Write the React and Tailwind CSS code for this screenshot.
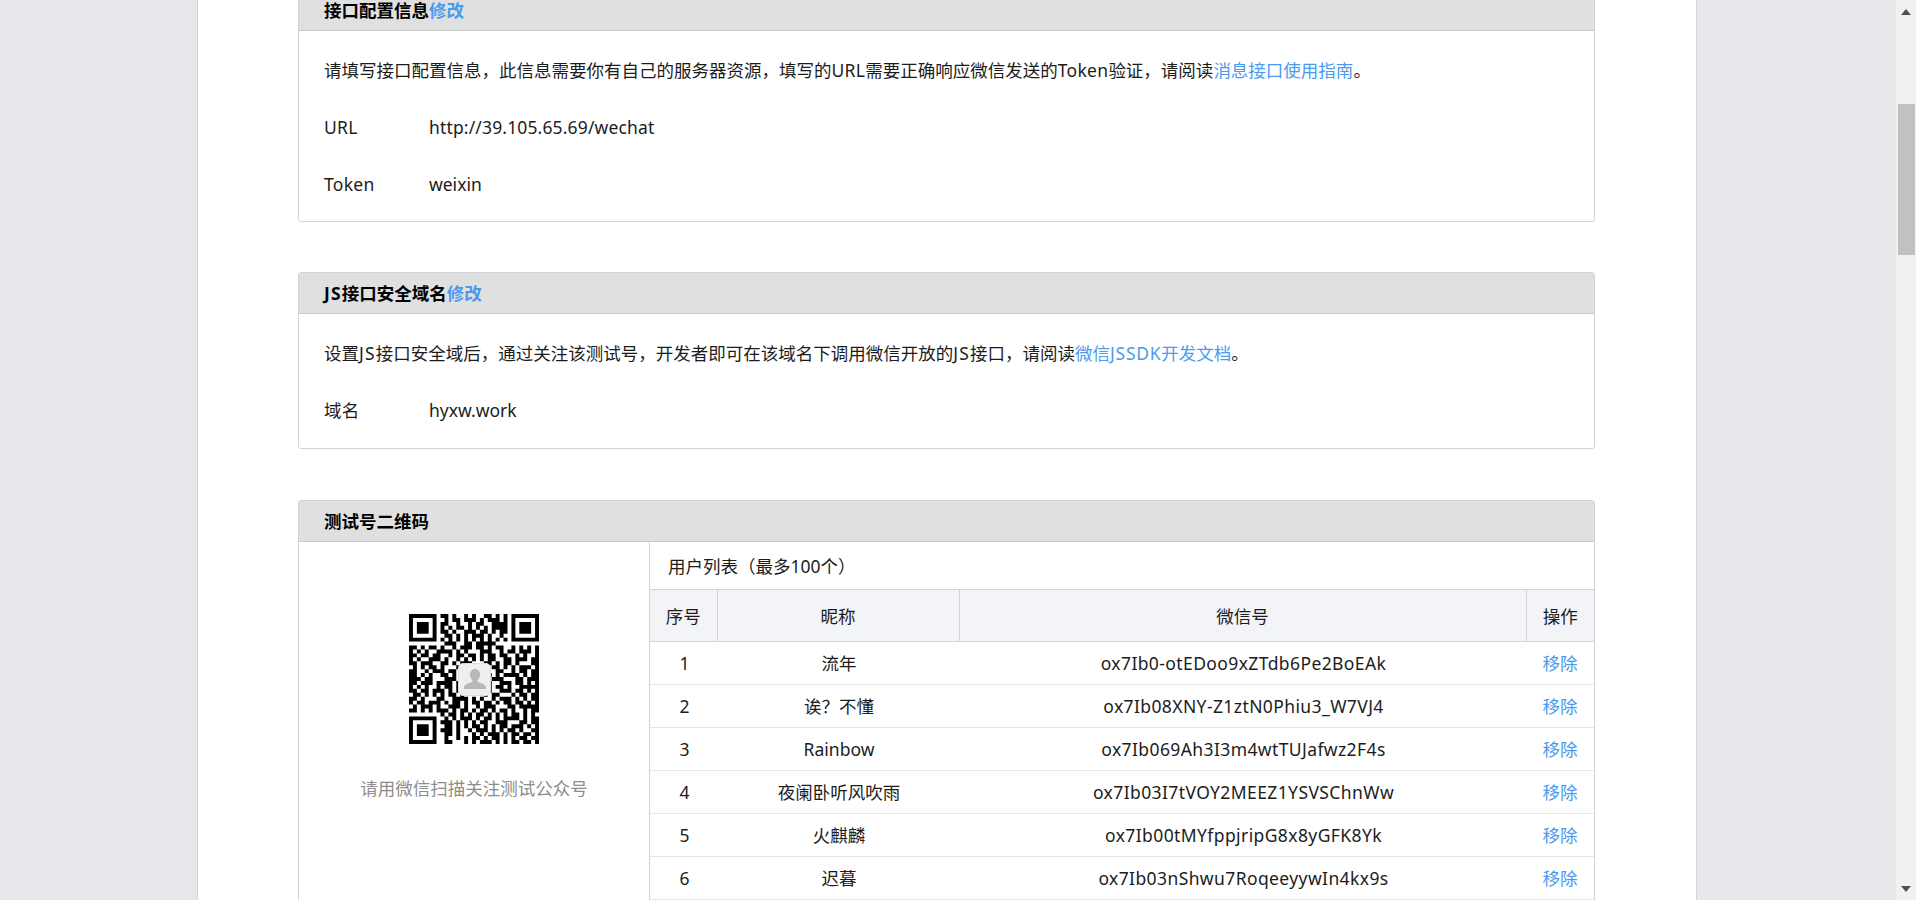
import React from 'react';

const finder = ['#######', '#.....#', '#.###.#', '#.###.#', '#.###.#', '#.....#', '#######'];

// rows of the data area next to the finder squares
const qrTop = [
  '##.#..#.#..##.#.#',
  '.#.##.###.#.###.#',
  '##..#..#.##..####',
  '#.#.##.#.#.#.####',
  '##.#..###.##.#.##',
  '.##.#.#.###.#..#.',
  '#.#.#.#.#.#.#.#.#',
  '.###..##.#####...',
];
const qrMiddle = [
  '##.#.##.#..#.###.##.#.##..#.#.#.#',
  '#.#.#..####.#.#...###..#.##.###.#',
  '##.##.##..#.##.##.#.##.##..#.#..#',
  '#.#..###.#..#.#.#.#.##..##.###.##',
  '##.###..##.#.###...##.#.##.#...##',
  '.#.#.##.#...#.#....#.##.#.#.###.#',
  '##..#.###.##.......#..##..#.##.##',
  '##.#.#..##.#.......##.#.####.#.##',
  '###.##...###.......#.###...##.###',
  '##.###.####.#......##..###.##.#.#',
  '#.#.#..#.##.#......##.##.#..#####',
  '##.##.###.#.#.....###..###.##.#.#',
  '.##.#.#.#.##.#.....#.##...#.##.##',
  '##.#...##..####.#.#..#.###.#.#.##',
  '#.##.###.#.##.#.##.##.#.##.##.#.#',
  '.#.###.#..###.#..#.###...##.#####',
  '##.#.#.###.#.##.#.##.#.##.#..#.##',
];
const qrBottomRight = [
  '#.##.#.#.##.#.#.#.##.#.#.',
  '.#.#.###.#.##.#.####.#.##',
  '###.#.#.#.##..###...##.##',
  '.##.#.#.##.#.#.##.###.#.#',
  '###.#..#.###.#.#.##.#..##',
  '.##.#...#.#.###.#.##.##.#',
  '.#..#.#.##.#.##.#.#.##.##',
  '.##...#.#.###.#.#.##.##.#',
];

const qrRows = [
  ...finder.map((row, i) => row + '.' + qrTop[i] + '.' + row),
  '........' + qrTop[7] + '........',
  ...qrMiddle,
  '........' + qrBottomRight[0],
  ...finder.map((row, i) => row + '.' + qrBottomRight[i + 1]),
];

const qrPath = qrRows
  .map((row, y) =>
    row
      .split('')
      .map((cell, x) => (cell === '#' ? `M${x} ${y}h1v1h-1z` : ''))
      .join('')
  )
  .join('');

const users = [
  { id: 1, name: '流年', wx: 'ox7Ib0-otEDoo9xZTdb6Pe2BoEAk' },
  { id: 2, name: '诶？不懂', wx: 'ox7Ib08XNY-Z1ztN0Phiu3_W7VJ4' },
  { id: 3, name: 'Rainbow', wx: 'ox7Ib069Ah3I3m4wtTUJafwz2F4s' },
  { id: 4, name: '夜阑卧听风吹雨', wx: 'ox7Ib03I7tVOY2MEEZ1YSVSChnWw' },
  { id: 5, name: '火麒麟', wx: 'ox7Ib00tMYfppjripG8x8yGFK8Yk' },
  { id: 6, name: '迟暮', wx: 'ox7Ib03nShwu7RoqeeyywIn4kx9s' },
];

const Panel = ({ title, edit, className = '', children }) => (
  <section className={`rounded-[3px] border border-[#d4d4d4] ${className}`}>
    <h3 className="flex h-[41px] items-center border-b border-[#c9c9c9] bg-[#e0e0e0] px-[25px] font-bold leading-[18px] text-black">
      {title}
      {edit && <a className="text-[#4a9bf0]">修改</a>}
    </h3>
    {children}
  </section>
);

const Row = ({ label, children }) => (
  <div className="flex h-[57px] items-center">
    {label && <span className="w-[105px] tracking-[0.3px]">{label}</span>}
    <span>{children}</span>
  </div>
);

const App = () => {
  return (
    <div className="flex h-[900px] w-full overflow-hidden bg-[#e6e8ec] text-[17.5px] text-[#1c1c1c] [font-family:'Noto_Sans','Noto_Sans_CJK_SC',sans-serif]">
      <div className="flex flex-1 justify-center pr-[2px]">
        <main className="h-full w-[1500px] border-x border-[#d4d4d4] bg-white pl-[100px] pr-[101px]">
          <Panel title="接口配置信息" edit className="-mt-[11px] pb-[8px]">
            <div className="px-[25px] pt-[11px]">
              <Row>
                请填写接口配置信息，此信息需要你有自己的服务器资源，填写的
                <span className="tracking-[0.3px]">URL</span>需要正确响应微信发送的
                <span className="tracking-[0.3px]">Token</span>验证，请阅读
                <a className="text-[#4a9bf0]">消息接口使用指南</a>。
              </Row>
              <Row label="URL">
                <span className="tracking-[0.15px]">http://39.105.65.69/wechat</span>
              </Row>
              <Row label="Token">weixin</Row>
            </div>
          </Panel>

          <Panel
            title={
              <>
                <span className="tracking-[1.2px]">JS</span>接口安全域名
              </>
            }
            edit
            className="mt-[50px] pb-[9px]"
          >
            <div className="px-[25px] pt-[11px]">
              <Row>
                设置<span className="tracking-[1.2px]">JS</span>接口安全域后，通过关注该测试号，开发者即可在该域名下调用微信开放的
                <span className="tracking-[1.2px]">JS</span>接口，请阅读
                <a className="text-[#4a9bf0]">
                  微信<span className="tracking-[0.7px]">JSSDK</span>开发文档
                </a>
                。
              </Row>
              <Row label="域名">hyxw.work</Row>
            </div>
          </Panel>

          <Panel title="测试号二维码" className="mt-[51px]">
            <div className="flex min-h-[420px]">
              <div className="flex w-[350px] flex-col items-center pt-[72px]">
                <div className="relative">
                  <svg width="130" height="130" viewBox="0 0 33 33" className="block">
                    <path d={qrPath} fill="#000" />
                  </svg>
                  <div className="absolute left-[49px] top-[49px] flex h-[33px] w-[33px] items-end justify-center overflow-hidden rounded-[5px] border border-[#dcdcdc] bg-[#efefef]">
                    <svg width="24" height="24" viewBox="0 0 24 24" className="mb-[3px]">
                      <path
                        d="M12 1c3 0 5 2.4 5 5.8 0 2.3-1 4.2-2.4 5.3v1.6c3.300 1.200 7.400 2.300 8.400 5.300v2H1v-2c1-3 5.100-4.100 8.400-5.300v-1.600C8 11 7 9.100 7 6.800 7 3.400 9 1 12 1z"
                        fill="#b8b8b8"
                      />
                    </svg>
                  </div>
                </div>
                <p className="mt-[31px] text-[#8d8d8d]">请用微信扫描关注测试公众号</p>
              </div>

              <div className="flex-1 border-l border-[#d4d4d4]">
                <div className="flex h-[48px] items-center border-b border-[#d4d4d4] pl-[18px] pt-[2px]">
                  用户列表（最多100个）
                </div>
                <table className="w-full table-fixed border-collapse text-center">
                  <colgroup>
                    <col className="w-[67px]" />
                    <col className="w-[242px]" />
                    <col />
                    <col className="w-[68px]" />
                  </colgroup>
                  <thead>
                    <tr className="h-[51px] border-b border-[#d4d4d4] bg-[#f3f4f8]">
                      <th className="border-r border-[#d4d4d4] pt-[2px] font-normal">序号</th>
                      <th className="border-r border-[#d4d4d4] pt-[2px] font-normal">昵称</th>
                      <th className="border-r border-[#d4d4d4] pt-[2px] font-normal">微信号</th>
                      <th className="pt-[2px] font-normal">操作</th>
                    </tr>
                  </thead>
                  <tbody>
                    {users.map((u) => (
                      <tr key={u.id} className="h-[43px] border-b border-[#e7e7eb]">
                        <td className="pl-[2px] pt-[2px]">{u.id}</td>
                        <td className="pl-[2px] pt-[2px]">{u.name}</td>
                        <td className="pl-[2px] pt-[2px] tracking-[0.4px]">{u.wx}</td>
                        <td className="pt-[2px]">
                          <a className="text-[#4a9bf0]">移除</a>
                        </td>
                      </tr>
                    ))}
                  </tbody>
                </table>
              </div>
            </div>
          </Panel>
        </main>
      </div>

      <div className="flex h-full w-[20px] flex-col items-center bg-[#f1f1f1]">
        <div className="flex h-[24px] items-center justify-center">
          <svg width="10" height="6" viewBox="0 0 10 6">
            <path d="M5 0l5 6H0z" fill="#505050" />
          </svg>
        </div>
        <div className="mt-[80px] h-[151px] w-[17px] bg-[#c1c1c1]" />
        <div className="flex-1" />
        <div className="flex h-[18px] items-center justify-center pb-[4px]">
          <svg width="10" height="6" viewBox="0 0 10 6">
            <path d="M0 0h10L5 6z" fill="#505050" />
          </svg>
        </div>
      </div>
    </div>
  );
};

export default App;
